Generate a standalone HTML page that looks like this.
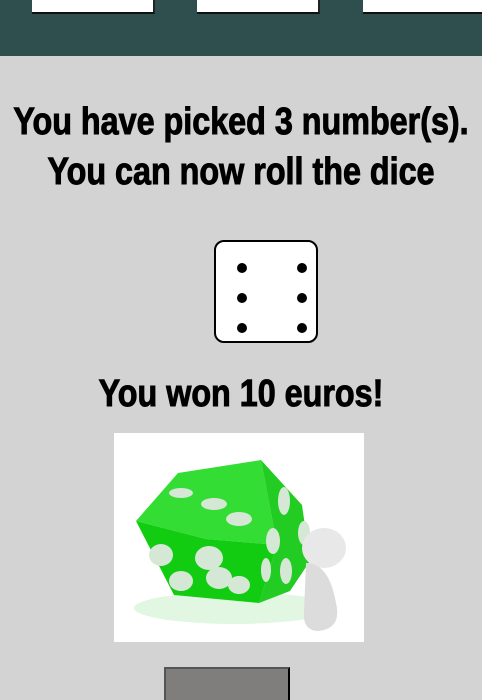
<!DOCTYPE html>
<html><head><style>
html,body{margin:0;padding:0;overflow:hidden;height:700px;}
body{width:482px;background:#d3d3d3;position:relative;font-family:"Liberation Sans",sans-serif;}
.hdr{position:absolute;left:0;top:0;width:482px;height:56px;background:#2f4f4f;}
.box{position:absolute;top:-2px;height:14px;background:#fff;border-right:2px solid #222;border-bottom:2px solid #111;}
.t{position:absolute;left:241px;font-weight:bold;color:#000;white-space:nowrap;font-size:38px;line-height:44px;-webkit-text-stroke:1px #000;transform:translateX(-50%) scaleX(0.85);}
.dice{position:absolute;left:214px;top:240px;width:100px;height:99px;background:#fff;border:2px solid #000;border-radius:10px;}
.dot{position:absolute;width:10px;height:10px;border-radius:50%;background:#000;}
.clip{position:absolute;left:0;top:600px;width:482px;height:100px;overflow:hidden;}
.btn{position:absolute;left:164px;top:67px;width:122px;height:40px;background:#807d7d;border:2px solid #555;border-right-color:#000;}
</style></head><body>
<div class="hdr">
<div class="box" style="left:32px;width:121px"></div>
<div class="box" style="left:197px;width:121px"></div>
<div class="box" style="left:363px;width:122px"></div>
</div>
<div class="t" style="top:100px">You have picked 3 number(s).</div>
<div class="t" style="top:150px">You can now roll the dice</div>
<div class="dice">
<div class="dot" style="left:21px;top:21px"></div><div class="dot" style="left:81px;top:21px"></div>
<div class="dot" style="left:21px;top:51px"></div><div class="dot" style="left:81px;top:51px"></div>
<div class="dot" style="left:21px;top:81px"></div><div class="dot" style="left:81px;top:81px"></div>
</div>
<div class="t" style="top:372px">You won 10 euros!</div>
<svg style="position:absolute;left:114px;top:433px" width="250" height="209" viewBox="0 0 250 209">
<rect width="250" height="209" fill="#fff"/>
<ellipse cx="120" cy="175" rx="100" ry="16" fill="#e2f7e2"/>
<polygon points="22,88 64,40 147,27 163,112 92,106" fill="#33dd33"/>
<polygon points="147,27 163,112 145,170 176,158 196,128 188,72" fill="#22cc22"/>
<polygon points="22,88 92,106 163,112 145,170 60,162" fill="#11cc11"/>
<g fill="#d5e8d5">
<ellipse cx="67" cy="60" rx="12" ry="5"/><ellipse cx="100" cy="71" rx="13" ry="6"/><ellipse cx="125" cy="86" rx="13" ry="7"/>
<ellipse cx="47" cy="122" rx="12" ry="11"/><ellipse cx="95" cy="125" rx="14" ry="12"/><ellipse cx="105" cy="145" rx="13" ry="11"/>
<ellipse cx="67" cy="148" rx="12" ry="10"/><ellipse cx="125" cy="152" rx="11" ry="9"/>
<ellipse cx="170" cy="68" rx="6" ry="14"/><ellipse cx="159" cy="108" rx="7" ry="13"/><ellipse cx="190" cy="100" rx="6" ry="12"/>
<ellipse cx="172" cy="138" rx="6" ry="13"/><ellipse cx="152" cy="137" rx="5" ry="12"/>
</g>
<ellipse cx="210" cy="115" rx="22" ry="20" fill="#e8e8e8"/>
<path d="M192 130 Q215 130 222 170 Q228 195 205 198 Q188 198 190 178 Z" fill="#dcdcdc"/>
</svg>
<div class="clip"><div class="btn"></div></div>
</body></html>
